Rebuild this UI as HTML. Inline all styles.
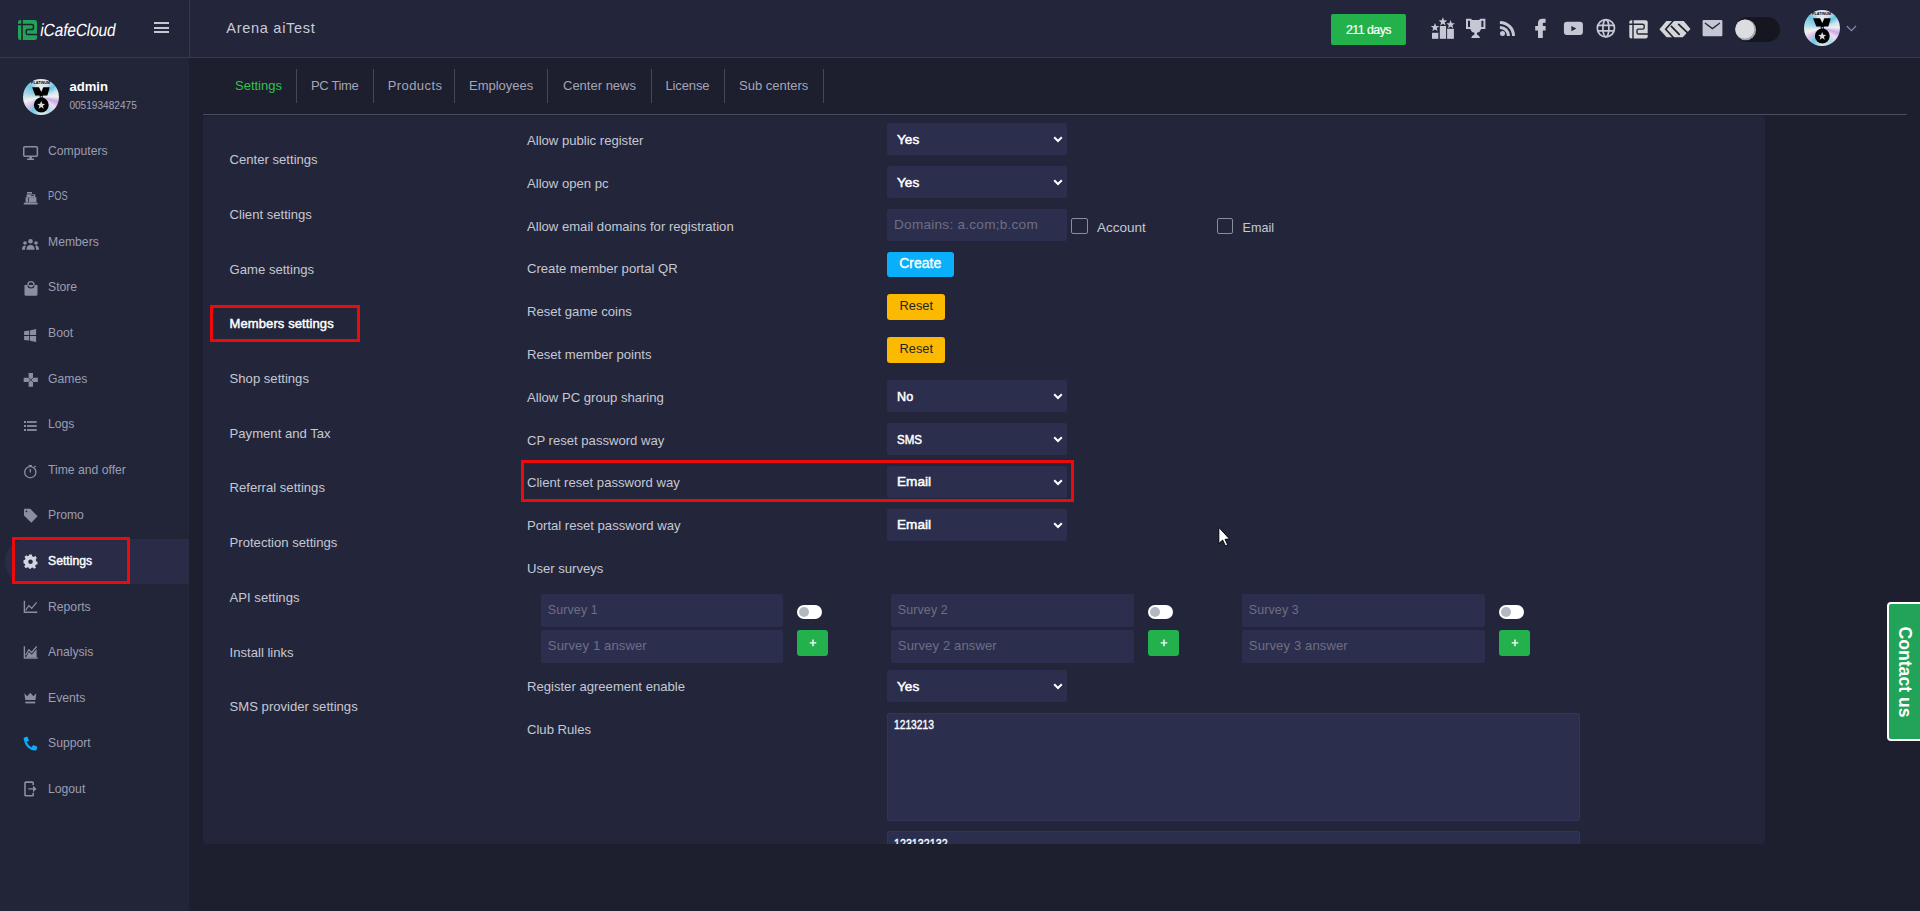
<!DOCTYPE html>
<html><head><meta charset="utf-8"><style>
html,body{margin:0;padding:0}
body{width:1920px;height:911px;overflow:hidden;position:relative;background:#1d1e2e;font-family:"Liberation Sans",sans-serif}
.a{position:absolute}
.t{position:absolute;white-space:nowrap;line-height:1}
svg.a{display:block;overflow:visible}
</style></head><body>
<div class="a" style="left:0px;top:0px;width:1920px;height:57px;background:#23253a"></div>
<div class="a" style="left:0px;top:57px;width:1920px;height:1px;background:#34375a"></div>
<div class="a" style="left:189px;top:0px;width:1px;height:57px;background:#34375a"></div>
<div class="a" style="left:0px;top:58px;width:189px;height:853px;background:#222538"></div>
<div class="a" style="left:189px;top:58px;width:1731px;height:853px;background:#1d1e2e"></div>
<div class="a" style="left:203px;top:114px;width:1704px;height:1px;background:#4a4c60"></div>
<div class="a" style="left:203px;top:116px;width:1562px;height:728px;background:#23263a;border-radius:4px"></div>
<!-- logo -->
<svg class="a" style="left:18px;top:20px" width="19" height="20" viewBox="0 0 19 20">
<rect x="0" y="0" width="19" height="20" rx="2.2" fill="#21a358"/>
<path d="M4 0V20" stroke="#1e2130" stroke-width="1.6"/>
<path d="M0 4.5H13.8Q15.5 4.5 15.5 6.2V7.8Q15.5 9.6 13.8 9.6H10Q8.2 9.6 8.2 11.3V13Q8.2 14.6 10 14.6H19" fill="none" stroke="#1e2130" stroke-width="1.5"/>
</svg>
<div class="t" style="left:39px;top:21.8px;font-size:17.6px;color:#fff;transform:skewX(-9deg) scaleX(0.885);transform-origin:0 100%;letter-spacing:-0.2px">iCafeCloud</div>
<!-- hamburger -->
<div class="a" style="left:153.6px;top:22px;width:15.6px;height:2px;background:#c4c6d0"></div>
<div class="a" style="left:153.6px;top:26.5px;width:15.6px;height:2px;background:#c4c6d0"></div>
<div class="a" style="left:153.6px;top:31px;width:15.6px;height:2px;background:#c4c6d0"></div>
<!-- title -->
<div class="t" style="left:226.3px;top:21.4px;font-size:14.6px;color:#c9cbd6;letter-spacing:0.68px">Arena aiTest</div>
<!-- days button -->
<div class="a" style="left:1331px;top:14px;width:75px;height:31px;background:#22b14a;border-radius:2px"></div>
<div class="t" style="left:1346px;top:23.5px;font-size:12.4px;color:#fff;letter-spacing:-0.55px;-webkit-text-stroke:0.2px #fff">211 days</div>
<!-- ranking icon -->
<svg class="a" style="left:1425px;top:12px" width="32" height="30" viewBox="0 0 32 30">
<g fill="#c5c8d4">
<rect x="7" y="20.8" width="6.3" height="6"/>
<rect x="14.8" y="14" width="6.3" height="12.8"/>
<rect x="22.1" y="16.8" width="6.8" height="10"/>
<path id="st" d="M0 -4L1.05 -1.3L3.8 -1.2L1.6 0.6L2.4 3.3L0 1.8L-2.4 3.3L-1.6 0.6L-3.8 -1.2L-1.05 -1.3Z" transform="translate(10 15.4) scale(1.12)"/>
<path d="M0 -4L1.05 -1.3L3.8 -1.2L1.6 0.6L2.4 3.3L0 1.8L-2.4 3.3L-1.6 0.6L-3.8 -1.2L-1.05 -1.3Z" transform="translate(17.9 9.8) scale(1.12)"/>
<path d="M0 -4L1.05 -1.3L3.8 -1.2L1.6 0.6L2.4 3.3L0 1.8L-2.4 3.3L-1.6 0.6L-3.8 -1.2L-1.05 -1.3Z" transform="translate(25.6 12.6) scale(1.12)"/>
</g></svg>
<!-- trophy -->
<svg class="a" style="left:1465px;top:18px" width="22" height="21" viewBox="0 0 22 21">
<path fill="#c5c8d4" fill-rule="evenodd" d="M1 0.7H6.1L6.9 2.1H14.1L15.3 0.7H20.4V11H16.2Q15.2 14.2 12 14.8V16.6Q14.2 17.6 15.1 20H6.1Q7 17.6 9.4 16.6V14.8Q6.2 14.2 5.2 11H1ZM3 2.7V9H5V2.7ZM16.4 2.7V9H18.4V2.7Z"/>
</svg>
<!-- rss -->
<svg class="a" style="left:1499px;top:20px" width="18" height="17" viewBox="0 0 18 17">
<circle cx="3.5" cy="13.6" r="2.5" fill="#c5c8d4"/>
<path d="M0.9 7.4A8.6 8.6 0 0 1 9.5 16" fill="none" stroke="#c5c8d4" stroke-width="3"/>
<path d="M0.9 2.4A13.6 13.6 0 0 1 14.5 16" fill="none" stroke="#c5c8d4" stroke-width="3"/>
</svg>
<!-- facebook -->
<svg class="a" style="left:1534px;top:18px" width="13" height="21" viewBox="0 0 13 21">
<path fill="#c5c8d4" d="M4 20V12.6H1.2V8.1H4V5.2Q4 0.8 8.6 0.8H11.6V4.8H9.6Q8.8 4.8 8.8 5.8V8.1H11.6V12.6H8.8V20Z"/>
</svg>
<!-- youtube -->
<svg class="a" style="left:1563px;top:21px" width="21" height="15" viewBox="0 0 21 15">
<rect x="0.9" y="0.8" width="19" height="13.2" rx="3" fill="#c5c8d4"/>
<path d="M8.4 4.9V10.3L13.4 7.6Z" fill="#23253a"/>
</svg>
<!-- globe -->
<svg class="a" style="left:1595px;top:18px" width="22" height="22" viewBox="0 0 22 22">
<g fill="none" stroke="#c5c8d4" stroke-width="1.7">
<circle cx="10.9" cy="10.2" r="8.6"/>
<ellipse cx="10.9" cy="10.2" rx="3" ry="8.6"/>
<path d="M2.6 7.3H19.2M2.6 12.9H19.2"/>
</g></svg>
<!-- icafe small -->
<svg class="a" style="left:1628.5px;top:19.5px" width="19" height="19" viewBox="0 0 19 19">
<rect x="0.3" y="0.3" width="18.4" height="18.2" rx="2" fill="#d5d6d9"/>
<path d="M4 0V19" stroke="#23253a" stroke-width="1.4"/>
<path d="M0 4.2H13.6Q15.2 4.2 15.2 5.8V7.5Q15.2 9.1 13.6 9.1H9.6Q8 9.1 8 10.7V12.4Q8 14 9.6 14H19" fill="none" stroke="#23253a" stroke-width="1.4"/>
</svg>
<!-- chevrons logo -->
<svg class="a" style="left:1656px;top:18px" width="38" height="22" viewBox="0 0 38 22">
<path fill="#d4d5d8" d="M3.4 11.35L10.4 3.1H27.8L34.5 10.9L31.2 14.4L26.8 19.3H10.6Z"/>
<g stroke="#1e2030" fill="none">
<path d="M17.4 2.4L9.7 11.35L17.8 20" stroke-width="1.6"/>
<path d="M15.4 8.3L23.2 16.4" stroke-width="1.7" stroke-linecap="round"/>
<path d="M22.7 6.4L32.2 15.3" stroke-width="1.7" stroke-linecap="round"/>
</g></svg>
<!-- mail -->
<svg class="a" style="left:1702px;top:20px" width="21" height="17" viewBox="0 0 21 17">
<rect x="0.6" y="0.1" width="19.8" height="16.1" rx="1" fill="#c5c8d4"/>
<path d="M2.9 3L10.4 8.6L17.9 3" fill="none" stroke="#23253a" stroke-width="1.3"/>
</svg>
<!-- dark toggle -->
<div class="a" style="left:1735px;top:17px;width:45px;height:25px;border-radius:12.5px;background:#15161f"></div>
<svg class="a" style="left:1735px;top:19px" width="22" height="22" viewBox="0 0 22 22">
<circle cx="10.7" cy="10.9" r="10.4" fill="#a1a3ab"/>
<circle cx="9.8" cy="10" r="9.6" fill="#dcdde1"/>
</svg>
<!-- top avatar -->
<div class="a" style="left:1804px;top:10px;width:36px;height:36px;border-radius:50%;background:conic-gradient(from 0deg,#e6e9ef 0deg,#d4dfe9 28deg,#62c6e4 50deg,#cfe3ec 70deg,#f2eff4 88deg,#c8a8e6 106deg,#ecdff1 126deg,#aad8ea 150deg,#e4e8ee 180deg,#70c8e4 210deg,#dfc6ea 236deg,#f5f1ee 256deg,#a4d6e6 285deg,#6cc4de 315deg,#dae3eb 340deg,#e6e9ef 360deg)"></div>
<svg class="a" style="left:1804px;top:10px" width="36" height="36" viewBox="0 0 36 36">
<path d="M9.1 8.3H16L18.3 13.1L20.3 8.3H26.8L24.3 16.6H19.7V19.4H16.8V16.6H12.3Z" fill="#000"/><circle cx="18.3" cy="17.9" r="0.8" fill="#cfd6e0"/>
<circle cx="18.3" cy="26" r="7.4" fill="#000"/>
<path fill="#d8dce6" d="M0 -4.2L1.1 -1.35L4 -1.3L1.72 0.57L2.53 3.44L0 1.86L-2.53 3.44L-1.72 0.57L-4 -1.3L-1.1 -1.35Z" transform="translate(18.2 26.2)"/>
<text x="17.6" y="4.9" font-size="4.3" font-weight="700" text-anchor="middle" fill="#000" font-family="Liberation Sans" textLength="19" lengthAdjust="spacingAndGlyphs">PLATINUM</text>
</svg>
<svg class="a" style="left:1846px;top:25px" width="11" height="7" viewBox="0 0 11 7">
<path d="M0.8 1L5.4 5.6L10 1" fill="none" stroke="#8088b0" stroke-width="1.3"/>
</svg>

<!-- active bg -->
<div class="a" style="left:5px;top:539px;width:184px;height:45px;background:#2a2c47;border-radius:22px 0 0 22px"></div>
<div class="a" style="left:12px;top:537px;width:118px;height:47px;border:3px solid #ec0a0c;box-sizing:border-box"></div>
<!-- avatar -->
<div class="a" style="left:23px;top:79px;width:36px;height:36px;border-radius:50%;background:conic-gradient(from 0deg,#e6e9ef 0deg,#d4dfe9 28deg,#62c6e4 50deg,#cfe3ec 70deg,#f2eff4 88deg,#c8a8e6 106deg,#ecdff1 126deg,#aad8ea 150deg,#e4e8ee 180deg,#70c8e4 210deg,#dfc6ea 236deg,#f5f1ee 256deg,#a4d6e6 285deg,#6cc4de 315deg,#dae3eb 340deg,#e6e9ef 360deg)"></div>
<svg class="a" style="left:23px;top:79px" width="36" height="36" viewBox="0 0 36 36">
<path d="M9.1 8.3H16L18.3 13.1L20.3 8.3H26.8L24.3 16.6H19.7V19.4H16.8V16.6H12.3Z" fill="#000"/><circle cx="18.3" cy="17.9" r="0.8" fill="#cfd6e0"/>
<circle cx="18.3" cy="26" r="7.4" fill="#000"/>
<path fill="#d8dce6" d="M0 -4.2L1.1 -1.35L4 -1.3L1.72 0.57L2.53 3.44L0 1.86L-2.53 3.44L-1.72 0.57L-4 -1.3L-1.1 -1.35Z" transform="translate(18.2 26.2)"/>
<text x="17.6" y="4.9" font-size="4.3" font-weight="700" text-anchor="middle" fill="#000" font-family="Liberation Sans" textLength="19" lengthAdjust="spacingAndGlyphs">PLATINUM</text>
</svg>
<g>
<!-- computers -->
<svg class="a" style="left:22px;top:145px" width="18" height="16" viewBox="0 0 18 16">
<rect x="1.75" y="1.75" width="13.6" height="9.6" rx="1" fill="none" stroke="#8a8ea4" stroke-width="1.5"/>
<path d="M7.2 11.5H9.9V13.6H12V15H5.1V13.6H7.2Z" fill="#8a8ea4"/>
</svg>
<!-- pos -->
<svg class="a" style="left:23px;top:191px" width="16" height="15" viewBox="0 0 16 15">
<g fill="#8a8ea4">
<rect x="4" y="1" width="5" height="1.6"/>
<path d="M2.6 6.2H13.4V11.5H2.6Z"/>
<path d="M3.6 3.3H12.2V6.2H3.6Z"/>
<rect x="0.8" y="11.7" width="13.8" height="1.8"/>
</g>
<path d="M8 4.4H11" stroke="#222538" stroke-width="0.9"/>
<path d="M5.5 6.8V11" stroke="#222538" stroke-width="0.8"/>
</svg>
<!-- members -->
<svg class="a" style="left:21px;top:238px" width="19" height="13" viewBox="0 0 19 13">
<g fill="#8a8ea4">
<circle cx="9.5" cy="3.3" r="2.3"/>
<circle cx="4" cy="5" r="1.8"/>
<circle cx="15" cy="5" r="1.8"/>
<path d="M5.4 11.8Q5.4 7 9.5 7Q13.6 7 13.6 11.8Z"/>
<path d="M1 11.8Q1 8 3.6 7.6Q4.6 7.6 5 8Q3.8 9.2 3.9 11.8Z"/>
<path d="M18 11.8Q18 8 15.4 7.6Q14.4 7.6 14 8Q15.2 9.2 15.1 11.8Z"/>
</g></svg>
<!-- store -->
<svg class="a" style="left:23px;top:280px" width="16" height="17" viewBox="0 0 16 17">
<path d="M1.5 5H14.5V14.6Q14.5 15.7 13.4 15.7H2.6Q1.5 15.7 1.5 14.6Z" fill="#8a8ea4"/>
<path d="M5 7V4.5Q5 1.6 8 1.6Q11 1.6 11 4.5V7" fill="none" stroke="#8a8ea4" stroke-width="1.4"/>
<path d="M5 5.6Q5 8 8 8Q11 8 11 5.6" fill="none" stroke="#222538" stroke-width="1.2"/>
</svg>
<!-- boot windows -->
<svg class="a" style="left:23px;top:328px" width="15" height="15" viewBox="0 0 15 15">
<g fill="#8a8ea4">
<path d="M1.1 3.2L6.2 2.5V7.1H1.1Z"/>
<path d="M7 2.4L13.1 1.1V7.1H7Z"/>
<path d="M1.1 7.9H6.2V12.6L1.1 11.9Z"/>
<path d="M7 7.9H13.1V13.9L7 12.7Z"/>
</g></svg>
<!-- games -->
<svg class="a" style="left:23px;top:372px" width="16" height="16" viewBox="0 0 16 16">
<g fill="#8a8ea4">
<path d="M5.6 1H10V5.6L7.8 7.6L5.6 5.6Z"/>
<path d="M5.6 14.8H10V10.2L7.8 8.2L5.6 10.2Z"/>
<path d="M0.7 5.7V10.1H5.3L7.3 7.9L5.3 5.7Z"/>
<path d="M14.9 5.7V10.1H10.3L8.3 7.9L10.3 5.7Z"/>
</g></svg>
<!-- logs -->
<svg class="a" style="left:23px;top:420px" width="15" height="12" viewBox="0 0 15 12">
<g fill="#8a8ea4">
<rect x="1" y="1" width="2" height="2"/><rect x="4" y="1.1" width="9.7" height="1.8"/>
<rect x="1" y="5" width="2" height="2"/><rect x="4" y="5.1" width="9.7" height="1.8"/>
<rect x="1" y="9" width="2" height="2"/><rect x="4" y="9.1" width="9.7" height="1.8"/>
</g></svg>
<!-- time -->
<svg class="a" style="left:23px;top:464px" width="15" height="15" viewBox="0 0 15 15">
<g fill="none" stroke="#8a8ea4" stroke-width="1.3">
<circle cx="7.3" cy="8.2" r="5.6"/>
<path d="M7.3 8.4V5M5.6 1.6H9M11.4 3.2L12.6 2"/>
</g></svg>
<!-- promo tag -->
<svg class="a" style="left:23px;top:508px" width="16" height="16" viewBox="0 0 16 16">
<path d="M1 1.2Q1 0.8 1.4 0.8H7.2L14.6 8.2L8.3 14.8L1 7.5Z" fill="#8a8ea4"/>
<circle cx="3.4" cy="3.3" r="0.9" fill="#222538"/>
</svg>
<!-- settings gear -->
<svg class="a" style="left:23px;top:554px" width="15" height="15" viewBox="-7.5 -7.5 15 15">
<path fill="#d2d5df" fill-rule="evenodd" d="M-1.3 -7H1.3L1.7 -5.2L3.1 -4.5L4.8 -5.5L6.4 -3.6L5.2 -2L5.5 -0.5L7 0.4V2.8L5.3 3.2L4.6 4.5L5.5 6.2L3.6 7.3L2.2 6L0.8 6.4L0.3 7.3H-1.3L-1.7 6.3L-3 5.8L-4.6 6.8L-6.3 5L-5.3 3.5L-5.8 2.2L-7 1.8V-1.2L-5.5 -1.7L-5 -3L-6 -4.6L-4.3 -6.3L-2.8 -5.3L-1.7 -5.7ZM2.3 0.2A2.3 2.3 0 1 0 -2.3 0.2A2.3 2.3 0 1 0 2.3 0.2Z"/>
</svg>
<!-- reports -->
<svg class="a" style="left:23px;top:600px" width="16" height="14" viewBox="0 0 16 14">
<path d="M1.4 0.8V12.2H14.3" fill="none" stroke="#8a8ea4" stroke-width="1.4"/>
<path d="M2.6 10.4L5.8 5.6L8.7 8.3L13.6 2.3" fill="none" stroke="#8a8ea4" stroke-width="1.2"/>
</svg>
<!-- analysis -->
<svg class="a" style="left:23px;top:645px" width="16" height="15" viewBox="0 0 16 15">
<path d="M1.4 1.2V13H14.6" fill="none" stroke="#8a8ea4" stroke-width="1.4"/>
<path d="M2.6 10.2L5.8 4.8L8.7 7.5L13.6 1.5" fill="none" stroke="#8a8ea4" stroke-width="1.2"/>
<path d="M3 12.3L5.9 7.1L8.8 9.8L13.6 4V12.3Z" fill="#8a8ea4"/>
</svg>
<!-- events crown -->
<svg class="a" style="left:23px;top:692px" width="15" height="13" viewBox="0 0 15 13">
<path d="M1.3 1.2L4.2 4.2L7.3 0.8L10.4 4.2L13.4 1.2L12.4 8.1H2.3Z" fill="#8a8ea4"/>
<rect x="2.3" y="9.6" width="10" height="1.8" fill="#8a8ea4"/>
</svg>
<!-- support phone -->
<svg class="a" style="left:23px;top:736px" width="15" height="15" viewBox="0 0 15 15">
<path d="M1.3 1.5L4.3 0.6L6 4.6L3.6 6.1Q5.2 9.6 8.6 11.4L10.2 9.1L14.3 10.8L13.6 13.7Q13.2 14.6 12 14.6Q2.6 13.8 0.6 2.8Q0.6 1.8 1.3 1.5Z" fill="#0aaffb"/>
</svg>
<!-- logout -->
<svg class="a" style="left:23px;top:781px" width="15" height="16" viewBox="0 0 15 16">
<path d="M10.2 4V1.9Q10.2 1.1 9.4 1.1H2.8Q2 1.1 2 1.9V13.9Q2 14.7 2.8 14.7H9.4Q10.2 14.7 10.2 13.9V11.8" fill="none" stroke="#8a8ea4" stroke-width="1.6"/>
<path d="M5.3 7.2H10V4.6L13.5 7.9L10 11.2V8.6H5.3Z" fill="#8a8ea4"/>
</svg>
</g>

<div class="t" style="left:69.40px;top:80.31px;font-size:13.1px;color:#ffffff;font-weight:700;">admin</div>
<div class="t" style="left:69.40px;top:100.75px;font-size:10.1px;color:#a3a6b8;font-weight:400;">005193482475</div>
<div class="t" style="left:48.00px;top:144.67px;font-size:12.2px;color:#9a9eb2;font-weight:400;">Computers</div>
<div class="t" style="left:48.00px;top:190.27px;font-size:12.2px;color:#9a9eb2;font-weight:400;transform:scaleX(0.765);transform-origin:0 0">POS</div>
<div class="t" style="left:48.00px;top:235.87px;font-size:12.2px;color:#9a9eb2;font-weight:400;">Members</div>
<div class="t" style="left:48.00px;top:281.47px;font-size:12.2px;color:#9a9eb2;font-weight:400;">Store</div>
<div class="t" style="left:48.00px;top:327.07px;font-size:12.2px;color:#9a9eb2;font-weight:400;">Boot</div>
<div class="t" style="left:48.00px;top:372.67px;font-size:12.2px;color:#9a9eb2;font-weight:400;">Games</div>
<div class="t" style="left:48.00px;top:418.27px;font-size:12.2px;color:#9a9eb2;font-weight:400;">Logs</div>
<div class="t" style="left:48.00px;top:463.87px;font-size:12.2px;color:#9a9eb2;font-weight:400;">Time and offer</div>
<div class="t" style="left:48.00px;top:509.47px;font-size:12.2px;color:#9a9eb2;font-weight:400;">Promo</div>
<div class="t" style="left:48.00px;top:555.07px;font-size:12.2px;color:#ffffff;font-weight:400;-webkit-text-stroke:0.4px #fff">Settings</div>
<div class="t" style="left:48.00px;top:600.67px;font-size:12.2px;color:#9a9eb2;font-weight:400;">Reports</div>
<div class="t" style="left:48.00px;top:646.27px;font-size:12.2px;color:#9a9eb2;font-weight:400;">Analysis</div>
<div class="t" style="left:48.00px;top:691.87px;font-size:12.2px;color:#9a9eb2;font-weight:400;">Events</div>
<div class="t" style="left:48.00px;top:737.47px;font-size:12.2px;color:#9a9eb2;font-weight:400;">Support</div>
<div class="t" style="left:48.00px;top:783.07px;font-size:12.2px;color:#9a9eb2;font-weight:400;">Logout</div>
<div class="t" style="left:235.00px;top:78.80px;font-size:13px;color:#2ec44a;font-weight:400;letter-spacing:0px">Settings</div>
<div class="t" style="left:311.00px;top:78.80px;font-size:13px;color:#a2a6b8;font-weight:400;letter-spacing:-0.35px">PC Time</div>
<div class="t" style="left:387.70px;top:78.80px;font-size:13px;color:#a2a6b8;font-weight:400;letter-spacing:0.43px">Products</div>
<div class="t" style="left:469.00px;top:78.80px;font-size:13px;color:#a2a6b8;font-weight:400;letter-spacing:0px">Employees</div>
<div class="t" style="left:563.00px;top:78.80px;font-size:13px;color:#a2a6b8;font-weight:400;letter-spacing:0px">Center news</div>
<div class="t" style="left:665.40px;top:78.80px;font-size:13px;color:#a2a6b8;font-weight:400;letter-spacing:-0.1px">License</div>
<div class="t" style="left:739.00px;top:78.80px;font-size:13px;color:#a2a6b8;font-weight:400;letter-spacing:0px">Sub centers</div>
<div class="a" style="left:296px;top:69px;width:1px;height:34px;background:#45475a"></div>
<div class="a" style="left:373px;top:69px;width:1px;height:34px;background:#45475a"></div>
<div class="a" style="left:454px;top:69px;width:1px;height:34px;background:#45475a"></div>
<div class="a" style="left:547px;top:69px;width:1px;height:34px;background:#45475a"></div>
<div class="a" style="left:651px;top:69px;width:1px;height:34px;background:#45475a"></div>
<div class="a" style="left:724px;top:69px;width:1px;height:34px;background:#45475a"></div>
<div class="a" style="left:823px;top:69px;width:1px;height:34px;background:#45475a"></div>
<div class="t" style="left:229.60px;top:153.11px;font-size:13.1px;color:#c5c8d4;font-weight:400;">Center settings</div>
<div class="t" style="left:229.60px;top:207.83px;font-size:13.1px;color:#c5c8d4;font-weight:400;">Client settings</div>
<div class="t" style="left:229.60px;top:262.55px;font-size:13.1px;color:#c5c8d4;font-weight:400;">Game settings</div>
<div class="t" style="left:229.60px;top:317.36px;font-size:13.0px;color:#ffffff;font-weight:400;-webkit-text-stroke:0.45px #fff;letter-spacing:0.1px">Members settings</div>
<div class="t" style="left:229.60px;top:371.99px;font-size:13.1px;color:#c5c8d4;font-weight:400;">Shop settings</div>
<div class="t" style="left:229.60px;top:426.71px;font-size:13.1px;color:#c5c8d4;font-weight:400;">Payment and Tax</div>
<div class="t" style="left:229.60px;top:481.43px;font-size:13.1px;color:#c5c8d4;font-weight:400;">Referral settings</div>
<div class="t" style="left:229.60px;top:536.15px;font-size:13.1px;color:#c5c8d4;font-weight:400;">Protection settings</div>
<div class="t" style="left:229.60px;top:590.87px;font-size:13.1px;color:#c5c8d4;font-weight:400;">API settings</div>
<div class="t" style="left:229.60px;top:645.59px;font-size:13.1px;color:#c5c8d4;font-weight:400;">Install links</div>
<div class="t" style="left:229.60px;top:700.31px;font-size:13.1px;color:#c5c8d4;font-weight:400;">SMS provider settings</div>
<div class="a" style="left:210px;top:305px;width:150px;height:37px;border:3px solid #ec0a0c;box-sizing:border-box"></div>
<div class="t" style="left:527.00px;top:133.91px;font-size:13.1px;color:#c5c8d4;font-weight:400;">Allow public register</div>
<div class="t" style="left:527.00px;top:176.76px;font-size:13.1px;color:#c5c8d4;font-weight:400;">Allow open pc</div>
<div class="t" style="left:527.00px;top:219.61px;font-size:13.1px;color:#c5c8d4;font-weight:400;">Allow email domains for registration</div>
<div class="t" style="left:527.00px;top:262.46px;font-size:13.1px;color:#c5c8d4;font-weight:400;">Create member portal QR</div>
<div class="t" style="left:527.00px;top:305.31px;font-size:13.1px;color:#c5c8d4;font-weight:400;">Reset game coins</div>
<div class="t" style="left:527.00px;top:348.16px;font-size:13.1px;color:#c5c8d4;font-weight:400;">Reset member points</div>
<div class="t" style="left:527.00px;top:391.01px;font-size:13.1px;color:#c5c8d4;font-weight:400;">Allow PC group sharing</div>
<div class="t" style="left:527.00px;top:433.86px;font-size:13.1px;color:#c5c8d4;font-weight:400;">CP reset password way</div>
<div class="t" style="left:527.00px;top:475.81px;font-size:13.1px;color:#c5c8d4;font-weight:400;">Client reset password way</div>
<div class="t" style="left:527.00px;top:518.66px;font-size:13.1px;color:#c5c8d4;font-weight:400;">Portal reset password way</div>
<div class="t" style="left:527.00px;top:562.41px;font-size:13.1px;color:#c5c8d4;font-weight:400;">User surveys</div>
<div class="t" style="left:527.00px;top:679.71px;font-size:13.1px;color:#c5c8d4;font-weight:400;">Register agreement enable</div>
<div class="t" style="left:527.00px;top:723.21px;font-size:13.1px;color:#c5c8d4;font-weight:400;">Club Rules</div>
<div class="a" style="left:887px;top:123px;width:180px;height:32px;background:#2c2e4e;border-radius:2px"></div>
<div class="t" style="left:897.00px;top:132.69px;font-size:13.6px;color:#ffffff;font-weight:400;-webkit-text-stroke:0.5px #fff;transform:scaleX(1);transform-origin:0 0">Yes</div>
<svg class="a" style="left:1053px;top:136px" width="10" height="7" viewBox="0 0 10 7"><path d="M1.2 1.2 L5 5 L8.8 1.2" fill="none" stroke="#fff" stroke-width="2"/></svg>
<div class="a" style="left:887px;top:165.85px;width:180px;height:32px;background:#2c2e4e;border-radius:2px"></div>
<div class="t" style="left:897.00px;top:175.54px;font-size:13.6px;color:#ffffff;font-weight:400;-webkit-text-stroke:0.5px #fff;transform:scaleX(1);transform-origin:0 0">Yes</div>
<svg class="a" style="left:1053px;top:178.85px" width="10" height="7" viewBox="0 0 10 7"><path d="M1.2 1.2 L5 5 L8.8 1.2" fill="none" stroke="#fff" stroke-width="2"/></svg>
<div class="a" style="left:887px;top:209px;width:180px;height:32px;background:#2c2e4e;border-radius:2px"></div>
<div class="t" style="left:894.00px;top:218.49px;font-size:13.6px;color:#6d6f82;font-weight:400;letter-spacing:0.25px">Domains: a.com;b.com</div>
<div class="a" style="left:1071px;top:218px;width:17px;height:16px;border:1px solid #8a8d9e;border-radius:2px;box-sizing:border-box"></div>
<div class="t" style="left:1097.00px;top:220.87px;font-size:13.5px;color:#c5c8d4;font-weight:400;">Account</div>
<div class="a" style="left:1217px;top:218px;width:16px;height:16px;border:1px solid #8a8d9e;border-radius:2px;box-sizing:border-box"></div>
<div class="t" style="left:1242.60px;top:221.63px;font-size:12.6px;color:#c5c8d4;font-weight:400;">Email</div>
<div class="a" style="left:887px;top:252px;width:67px;height:25px;background:#0aaffb;border-radius:3px"></div>
<div class="t" style="left:899.20px;top:255.75px;font-size:14px;color:#ffffff;font-weight:400;-webkit-text-stroke:0.35px #fff">Create</div>
<div class="a" style="left:887px;top:294px;width:58px;height:26px;background:#fbb900;border-radius:3px"></div>
<div class="t" style="left:899.60px;top:300.36px;font-size:12.8px;color:#212529;font-weight:400;">Reset</div>
<div class="a" style="left:887px;top:337px;width:58px;height:26px;background:#fbb900;border-radius:3px"></div>
<div class="t" style="left:899.60px;top:343.26px;font-size:12.8px;color:#212529;font-weight:400;">Reset</div>
<div class="a" style="left:887px;top:380.1px;width:180px;height:32px;background:#2c2e4e;border-radius:2px"></div>
<div class="t" style="left:897.00px;top:389.79px;font-size:13.6px;color:#ffffff;font-weight:400;-webkit-text-stroke:0.5px #fff;transform:scaleX(0.93);transform-origin:0 0">No</div>
<svg class="a" style="left:1053px;top:393.1px" width="10" height="7" viewBox="0 0 10 7"><path d="M1.2 1.2 L5 5 L8.8 1.2" fill="none" stroke="#fff" stroke-width="2"/></svg>
<div class="a" style="left:887px;top:422.95px;width:180px;height:32px;background:#2c2e4e;border-radius:2px"></div>
<div class="t" style="left:897.00px;top:432.64px;font-size:13.6px;color:#ffffff;font-weight:400;-webkit-text-stroke:0.5px #fff;transform:scaleX(0.85);transform-origin:0 0">SMS</div>
<svg class="a" style="left:1053px;top:435.95px" width="10" height="7" viewBox="0 0 10 7"><path d="M1.2 1.2 L5 5 L8.8 1.2" fill="none" stroke="#fff" stroke-width="2"/></svg>
<div class="a" style="left:887px;top:465.8px;width:180px;height:32px;background:#2c2e4e;border-radius:2px"></div>
<div class="t" style="left:897.00px;top:475.49px;font-size:13.6px;color:#ffffff;font-weight:400;-webkit-text-stroke:0.5px #fff;transform:scaleX(1);transform-origin:0 0">Email</div>
<svg class="a" style="left:1053px;top:478.8px" width="10" height="7" viewBox="0 0 10 7"><path d="M1.2 1.2 L5 5 L8.8 1.2" fill="none" stroke="#fff" stroke-width="2"/></svg>
<div class="a" style="left:887px;top:508.65000000000003px;width:180px;height:32px;background:#2c2e4e;border-radius:2px"></div>
<div class="t" style="left:897.00px;top:518.34px;font-size:13.6px;color:#ffffff;font-weight:400;-webkit-text-stroke:0.5px #fff;transform:scaleX(1);transform-origin:0 0">Email</div>
<svg class="a" style="left:1053px;top:521.6500000000001px" width="10" height="7" viewBox="0 0 10 7"><path d="M1.2 1.2 L5 5 L8.8 1.2" fill="none" stroke="#fff" stroke-width="2"/></svg>
<div class="a" style="left:521px;top:460px;width:553px;height:42px;border:3px solid #ec0a0c;box-sizing:border-box"></div>
<div class="a" style="left:541px;top:594px;width:242px;height:33px;background:#2c2e4e;border-radius:2px"></div>
<div class="a" style="left:541px;top:630px;width:242px;height:33px;background:#2c2e4e;border-radius:2px"></div>
<div class="t" style="left:547.80px;top:603.70px;font-size:12.4px;color:#6d6f82;font-weight:400;letter-spacing:0.15px">Survey 1</div>
<div class="t" style="left:547.80px;top:639.11px;font-size:13.1px;color:#6d6f82;font-weight:400;letter-spacing:0.1px">Survey 1 answer</div>
<div class="a" style="left:797px;top:605px;width:25px;height:14px;background:#ffffff;border-radius:7px"></div>
<div class="a" style="left:799px;top:607px;width:10px;height:10px;background:#b3b7c0;border-radius:5px"></div>
<div class="a" style="left:797px;top:630px;width:31px;height:26px;background:#22b14c;border-radius:3px"></div>
<svg class="a" style="left:809px;top:639px" width="8" height="8" viewBox="0 0 8 8"><path d="M4 0.6V7.2M0.7 3.9H7.3" stroke="#fff" stroke-width="1.4"/></svg>
<div class="a" style="left:891px;top:594px;width:243px;height:33px;background:#2c2e4e;border-radius:2px"></div>
<div class="a" style="left:891px;top:630px;width:243px;height:33px;background:#2c2e4e;border-radius:2px"></div>
<div class="t" style="left:897.80px;top:603.70px;font-size:12.4px;color:#6d6f82;font-weight:400;letter-spacing:0.15px">Survey 2</div>
<div class="t" style="left:897.80px;top:639.11px;font-size:13.1px;color:#6d6f82;font-weight:400;letter-spacing:0.1px">Survey 2 answer</div>
<div class="a" style="left:1148px;top:605px;width:25px;height:14px;background:#ffffff;border-radius:7px"></div>
<div class="a" style="left:1150px;top:607px;width:10px;height:10px;background:#b3b7c0;border-radius:5px"></div>
<div class="a" style="left:1148px;top:630px;width:31px;height:26px;background:#22b14c;border-radius:3px"></div>
<svg class="a" style="left:1160px;top:639px" width="8" height="8" viewBox="0 0 8 8"><path d="M4 0.6V7.2M0.7 3.9H7.3" stroke="#fff" stroke-width="1.4"/></svg>
<div class="a" style="left:1242px;top:594px;width:243px;height:33px;background:#2c2e4e;border-radius:2px"></div>
<div class="a" style="left:1242px;top:630px;width:243px;height:33px;background:#2c2e4e;border-radius:2px"></div>
<div class="t" style="left:1248.80px;top:603.70px;font-size:12.4px;color:#6d6f82;font-weight:400;letter-spacing:0.15px">Survey 3</div>
<div class="t" style="left:1248.80px;top:639.11px;font-size:13.1px;color:#6d6f82;font-weight:400;letter-spacing:0.1px">Survey 3 answer</div>
<div class="a" style="left:1499px;top:605px;width:25px;height:14px;background:#ffffff;border-radius:7px"></div>
<div class="a" style="left:1501px;top:607px;width:10px;height:10px;background:#b3b7c0;border-radius:5px"></div>
<div class="a" style="left:1499px;top:630px;width:31px;height:26px;background:#22b14c;border-radius:3px"></div>
<svg class="a" style="left:1511px;top:639px" width="8" height="8" viewBox="0 0 8 8"><path d="M4 0.6V7.2M0.7 3.9H7.3" stroke="#fff" stroke-width="1.4"/></svg>
<div class="a" style="left:887px;top:670px;width:180px;height:32px;background:#2c2e4e;border-radius:2px"></div>
<div class="t" style="left:897.00px;top:679.69px;font-size:13.6px;color:#ffffff;font-weight:400;-webkit-text-stroke:0.5px #fff;transform:scaleX(1);transform-origin:0 0">Yes</div>
<svg class="a" style="left:1053px;top:683px" width="10" height="7" viewBox="0 0 10 7"><path d="M1.2 1.2 L5 5 L8.8 1.2" fill="none" stroke="#fff" stroke-width="2"/></svg>
<div class="a" style="left:887px;top:713px;width:693px;height:108px;background:#2c2e4e;border-radius:2px;border:1px solid #32355a;box-sizing:border-box"></div>
<div class="t" style="left:893.80px;top:717.66px;font-size:13.4px;color:#ffffff;font-weight:400;-webkit-text-stroke:0.4px #fff;transform:scaleX(0.765);transform-origin:0 0">1213213</div>
<div class="a" style="left:887px;top:831px;width:693px;height:13px;overflow:hidden"><div style="position:absolute;left:0;top:0;width:693px;height:60px;background:#2c2e4e;border-radius:2px;border:1px solid #32355a;box-sizing:border-box"></div><div class="t" style="left:6.8px;top:5.8px;font-size:13.4px;color:#fff;-webkit-text-stroke:0.4px #fff;transform:scaleX(0.80);transform-origin:0 0">123132132</div></div>
<div class="a" style="left:1887px;top:602px;width:40px;height:139px;background:#21a35a;border:2px solid #ffffff;border-radius:4px;box-sizing:border-box"></div>
<div class="t" style="left:1903.5px;top:671.5px;font-size:17.6px;color:#fff;font-weight:700;transform:translate(-50%,-50%) rotate(90deg);transform-origin:center">Contact us</div>
<svg class="a" style="left:1218px;top:526px" width="14" height="22" viewBox="0 0 14 22"><path d="M0.8 1.3L0.8 17.6L4.6 14.1L7.4 19.9L9.7 18.8L7.1 13.3L11.6 13.1Z" fill="#fff" stroke="#000" stroke-width="1" stroke-linejoin="round"/></svg>
</body></html>
